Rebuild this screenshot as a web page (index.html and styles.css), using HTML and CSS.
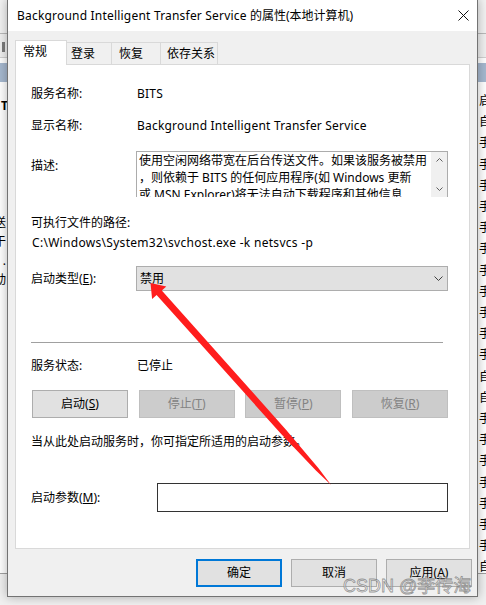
FILE: index.html
```html
<!DOCTYPE html>
<html lang="zh-CN">
<head>
<meta charset="utf-8">
<title>Background Intelligent Transfer Service 的属性(本地计算机)</title>
<link rel="stylesheet" href="styles.css">
</head>
<body>
<div class="desktop">
  <div class="backdrop">
    <div class="bd-menu"></div>
    <div class="bd-toolbar"><span class="bd-tool"></span></div>
    <div class="bd-gap"></div>
    <div class="bd-header"></div>
    <div class="bd-list">
      <div class="bd-pane">
        <div class="bd-bold">T</div>
        <div class="bd-desc">
          <div>送</div><div>于</div><div>s .</div><div>动</div>
        </div>
      </div>
      <div class="bd-col">
        <div>启</div><div>自</div><div>手</div><div>手</div><div>手</div><div>手</div><div>手</div><div>手</div><div>手</div><div>手</div><div>手</div><div>手</div><div>手</div><div>自</div><div>自</div><div>手</div><div>手</div><div>手</div><div>手</div><div>手</div><div>手</div><div>手</div><div>自</div>
      </div>
    </div>
    <div class="bd-status"></div>
  </div>

  <div class="window">
    <div class="titlebar">
      <span class="title"><span class="lat">Background Intelligent Transfer Service</span> 的属性(本地计算机)</span>
      <svg class="close" viewBox="0 0 11 11" width="11" height="11"><path d="M0.5 0.5 L10.5 10.5 M10.5 0.5 L0.5 10.5" fill="none" stroke="#111" stroke-width="1"/></svg>
    </div>

    <div class="tabs">
      <div class="tab tab-active">常规</div>
      <div class="tab tab-login">登录</div>
      <div class="tab tab-recovery">恢复</div>
      <div class="tab tab-deps">依存关系</div>
    </div>

    <div class="panel">
      <div class="field">
        <span class="label">服务名称:</span>
        <span class="lat">BITS</span>
      </div>
      <div class="field mt-16">
        <span class="label">显示名称:</span>
        <span class="lat">Background Intelligent Transfer Service</span>
      </div>
      <div class="field field-top mt-17">
        <span class="label label-narrow label-desc">描述:</span>
        <div class="descbox">
          <div class="desctext">使用空闲网络带宽在后台传送文件。如果该服务被禁用<br>，则依赖于 BITS 的任何应用程序(如 Windows 更新<br>或 MSN Explorer)将无法自动下载程序和其他信息</div>
          <div class="vscroll">
            <div class="sbtn"><svg class="chev-s" viewBox="0 0 7 4" width="7" height="4"><path d="M0.5 3.5 L3.5 0.5 L6.5 3.5" fill="none" stroke="#606060"/></svg></div>
            <div class="sbtn"><svg class="chev-s" viewBox="0 0 7 4" width="7" height="4"><path d="M0.5 0.5 L3.5 3.5 L6.5 0.5" fill="none" stroke="#606060"/></svg></div>
          </div>
        </div>
      </div>
      <div class="line mt-18">可执行文件的路径:</div>
      <div class="line path mt-4"><span class="lat-wide">C:\Windows\System32\svchost.exe -k netsvcs -p</span></div>
      <div class="field mt-15">
        <span class="label label-narrow">启动类型(<u>E</u>):</span>
        <div class="combo">
          <span>禁用</span>
          <svg class="chev-c" viewBox="0 0 9 5" width="9" height="5"><path d="M0.5 0.5 L4.5 4.5 L8.5 0.5" fill="none" stroke="#404040"/></svg>
        </div>
      </div>
      <div class="sep"></div>
      <div class="field mt-15">
        <span class="label">服务状态:</span>
        <span>已停止</span>
      </div>
      <div class="btnrow">
        <div class="btn">启动(<u>S</u>)</div>
        <div class="btn btn-disabled">停止(<u>T</u>)</div>
        <div class="btn btn-disabled">暂停(<u>P</u>)</div>
        <div class="btn btn-disabled">恢复(<u>R</u>)</div>
      </div>
      <div class="line mt-16">当从此处启动服务时，你可指定所适用的启动参数。</div>
      <div class="field mt-33">
        <span class="label label-wide">启动参数(<u>M</u>):</span>
        <div class="textbox"></div>
      </div>
    </div>

    <div class="dlg-buttons">
      <div class="dbtn dbtn-default">确定</div>
      <div class="dbtn">取消</div>
      <div class="dbtn">应用(<u>A</u>)</div>
    </div>
  </div>

  <svg class="arrow" viewBox="0 0 486 605" width="486" height="605">
    <polygon fill="#ff1d1d" points="150.5,283 166.3,286.4 161.8,290.4 286.2,430.0 318.5,468.2 331.1,485.1 315.9,470.6 281.4,434.2 156.6,295.0 152.1,299.0"/>
  </svg>
  <div class="watermark">CSDN @李传海</div>
</div>
</body>
</html>
```

FILE: styles.css
```css
* { box-sizing: border-box; }
html, body { margin: 0; padding: 0; }
body {
  width: 486px;
  height: 605px;
  overflow: hidden;
  font-family: "Noto Sans", "Noto Sans CJK SC", sans-serif;
  font-size: 12px;
  color: #000;
}
.desktop {
  position: relative;
  width: 486px;
  height: 605px;
  overflow: hidden;
  background: #fff;
}

/* ---------- backdrop (services window behind) ---------- */
.backdrop {
  position: absolute;
  left: 0; top: 0;
  width: 486px; height: 605px;
  display: flex;
  flex-direction: column;
  background: #fff;
}
.bd-menu { height: 34px; background: #f2f2f2; border-bottom: 1px solid #b9b9b9; flex: none; }
.bd-toolbar { height: 24px; background: #f0f0f0; border-bottom: 1px solid #d0d0d0; flex: none; padding: 8px 0 0 2px; }
.bd-tool { display: block; width: 3px; height: 10px; background: #7c7c7c; }
.bd-gap { height: 5px; flex: none; background: #fff; }
.bd-header { height: 19px; flex: none; background: #a6b8cf; }
.bd-list {
  flex: 1;
  display: grid;
  grid-template-columns: 479px 30px;
  overflow: hidden;
}
.bd-pane { padding-top: 16px; }
.bd-bold { font-weight: bold; line-height: 16px; margin-left: 1px; }
.bd-desc { margin: 99px 0 0 -6px; line-height: 19px; }
.bd-col { padding-top: 7px; line-height: 21.2px; font-family: "Noto Sans CJK SC", sans-serif; }
.bd-status { height: 32px; flex: none; background: #f0f0f0; border-top: 1px solid #a0a0a0; }

/* ---------- dialog window ---------- */
.window {
  position: absolute;
  left: 7px;
  top: -1px;
  width: 471px;
  border: 1px solid #737373;
  background: #f0f0f0;
  box-shadow: 0 0 10px rgba(0, 0, 0, 0.3);
  display: flex;
  flex-direction: column;
}
.titlebar {
  height: 31px;
  background: #fff;
  display: flex;
  align-items: center;
  justify-content: space-between;
  padding: 0 8px 0 9px;
}
.title { line-height: 16px; white-space: nowrap; }
.close { display: block; }
.lat { letter-spacing: 0.2px; }
.lat-wide { letter-spacing: 0.3px; }

/* tabs */
.tabs {
  height: 33px;
  display: flex;
  align-items: flex-end;
  padding-left: 7px;
  position: relative;
  z-index: 1;
}
.tab {
  height: 22px;
  padding-top: 3px;
  line-height: 16px;
  border-top: 1px solid #d9d9d9;
  border-right: 1px solid #d9d9d9;
  white-space: nowrap;
}
.tab-active {
  height: 25px;
  margin-bottom: -1px;
  width: 52px;
  padding-left: 7px;
  background: #fff;
  border-left: 1px solid #d9d9d9;
}
.tab-login { width: 45px; padding-left: 4px; }
.tab-recovery { width: 49px; padding-left: 7px; }
.tab-deps { width: 57px; padding-left: 6px; }

/* panel */
.panel {
  margin: 0 7px;
  background: #fff;
  border: 1px solid #d9d9d9;
  padding: 21px 20px 36px 15px;
  display: flex;
  flex-direction: column;
}
.field { display: flex; align-items: center; line-height: 16px; }
.field-top { align-items: flex-start; }
.label { flex: none; width: 106px; white-space: nowrap; }
.label-narrow { width: 105px; }
.label-wide { width: 126px; }
.label-desc { padding-top: 7px; }
.line { line-height: 16px; white-space: nowrap; }
.path { padding-left: 1px; }

.mt-4 { margin-top: 4px; }
.mt-15 { margin-top: 15px; }
.mt-16 { margin-top: 16px; }
.mt-17 { margin-top: 17px; }
.mt-18 { margin-top: 18px; }
.mt-33 { margin-top: 33px; }

.descbox {
  width: 312px;
  height: 46px;
  border: 1px solid #acacac;
  border-bottom: none;
  display: flex;
  background: #fff;
  overflow: hidden;
}
.desctext {
  flex: 1;
  padding-left: 2px;
  line-height: 17px;
  white-space: nowrap;
  overflow: hidden;
}
.vscroll {
  flex: none;
  width: 16px;
  background: #f0f0f0;
  display: flex;
  flex-direction: column;
  justify-content: space-between;
}
.sbtn { height: 16px; display: flex; align-items: center; justify-content: center; }
.chev-s, .chev-c { display: block; }

.combo {
  width: 312px;
  height: 25px;
  border: 1px solid #adadad;
  background: #e1e1e1;
  display: flex;
  align-items: center;
  justify-content: space-between;
  padding: 0 4px 0 3px;
}

.sep { height: 1px; width: 412px; background: #a0a0a0; margin-top: 51px; }

.btnrow {
  display: flex;
  justify-content: space-between;
  margin: 16px 1px 0 1px;
}
.btn, .dbtn {
  height: 28px;
  border: 1px solid #adadad;
  background: #e1e1e1;
  display: flex;
  align-items: center;
  justify-content: center;
  line-height: 16px;
  white-space: nowrap;
}
.btn { width: 96px; }
.btn-disabled { background: #cccccc; border-color: #bfbfbf; color: #838383; }

.textbox { width: 291px; height: 29px; border: 1px solid #333; background: #fff; }

.dlg-buttons {
  display: flex;
  justify-content: flex-end;
  gap: 9px;
  padding: 10px 5px 9px 0;
}
.dbtn { width: 86px; }
.dbtn-default { border: 2px solid #0078d7; }

/* overlays */
.arrow { position: absolute; left: 0; top: 0; pointer-events: none; }
.watermark {
  position: absolute;
  left: 343px;
  top: 577px;
  font-family: "Liberation Sans", "Noto Sans CJK SC", sans-serif;
  font-size: 18px;
  line-height: 18px;
  white-space: nowrap;
  color: rgba(245, 245, 245, 0.6);
  -webkit-text-stroke: 0.8px rgba(100, 100, 100, 0.65);
}
```
